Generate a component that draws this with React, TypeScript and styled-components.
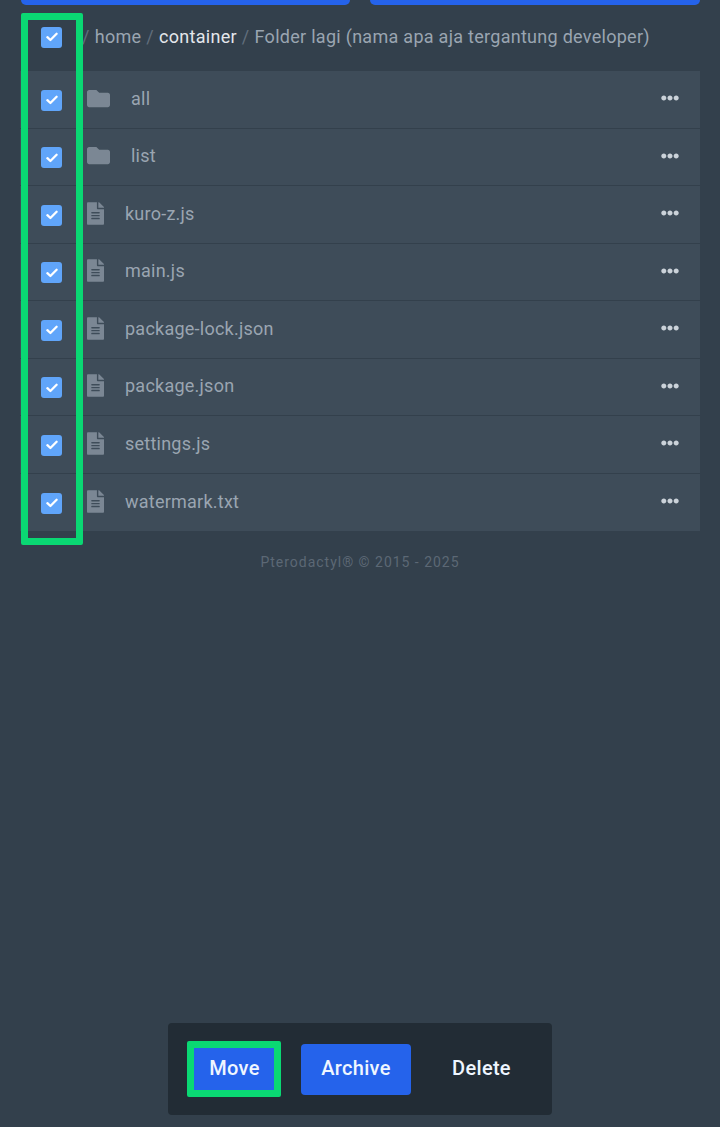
import React from "react";
import styled, { createGlobalStyle } from "styled-components";
import { FaFolder, FaFileAlt, FaEllipsisH } from "react-icons/fa";

const Global = createGlobalStyle`
  html, body { margin: 0; padding: 0; background: #33404c; }
  * { box-sizing: border-box; }
`;

const Page = styled.div`
  position: relative;
  min-height: 1127px;
  padding: 0 20px 12px;
  display: flex;
  flex-direction: column;
  font-family: Roboto, "Liberation Sans", sans-serif;
  letter-spacing: 0.015em;
  color: #9aa5b1;
`;

const TopActions = styled.div`
  display: grid;
  grid-template-columns: 329px 330px;
  gap: 20px;
  height: 5px;
  padding-left: 1px;
`;

const TopButton = styled.div`
  background: #2563eb;
  border-radius: 0 0 5px 5px;
`;

const BreadcrumbBar = styled.div`
  height: 66px;
  display: flex;
  align-items: center;
  padding: 0 0 2px 21px;
  font-size: 18px;
  letter-spacing: 0.0155em;
`;

const Check = styled.span`
  flex: none;
  width: 21px;
  height: 21px;
  border-radius: 3px;
  background: #60a5fa;
  display: flex;
  align-items: center;
  justify-content: center;
`;

const RowCheck = styled(Check)`
  margin-top: 2px;
`;

const Crumbs = styled.div`
  display: flex;
  align-items: center;
  margin: 0 0 1px 20px;
  white-space: nowrap;
`;

const Sep = styled.span`
  color: #616e7c;
  margin: 0 5px;
  &:first-child { margin-left: 0; }
`;

const Crumb = styled.span<{ $current?: boolean }>`
  color: ${(p) => (p.$current ? "#e4e7eb" : "#9aa5b1")};
`;

const List = styled.div`
  display: flex;
  flex-direction: column;
`;

const Row = styled.div`
  height: 57.5px;
  display: flex;
  align-items: center;
  padding: 0 21px 0 21px;
  background: #3e4c59;
  border-bottom: 1px solid #33404c;
  font-size: 18px;
  &:last-child { border-bottom: 0; }
`;

const IconCell = styled.span<{ $folder: boolean }>`
  flex: none;
  margin: 0 0 2px 25px;
  width: ${(p) => (p.$folder ? "44px" : "38px")};
  display: flex;
  align-items: center;
  color: #7b8794;
  svg { width: ${(p) => (p.$folder ? "23px" : "17px")}; height: 23px; display: block; }
`;

const Name = styled.span`
  flex: 1;
  margin-bottom: 2px;
  color: #9aa5b1;
`;

const Menu = styled.span`
  flex: none;
  margin-bottom: 2px;
  color: #cbd2d9;
  display: flex;
  svg { width: 18px; height: 18px; display: block; }
`;

const Footer = styled.p`
  margin: 21px 0 0;
  text-align: center;
  font-size: 14px;
  letter-spacing: 0.07em;
  line-height: 20px;
  color: #5c6875;
`;

const ActionBar = styled.div`
  position: relative;
  margin: auto auto 0;
  width: 384px;
  height: 92px;
  border-radius: 4px;
  background: #222c35;
  display: flex;
  align-items: center;
  padding: 0 26px;
  gap: 26px;
`;

const ActionButton = styled.button<{ $variant: "primary" | "ghost"; $w: number }>`
  width: ${(p) => p.$w}px;
  height: 51px;
  border: 0;
  border-radius: 4px;
  padding: 0 0 2px;
  background: ${(p) => (p.$variant === "primary" ? "#2563eb" : "transparent")};
  color: #eff6ff;
  font-family: inherit;
  font-size: 20px;
  font-weight: 500;
  letter-spacing: 0.015em;
`;

const Highlight = styled.div`
  position: absolute;
  border: 7px solid #0ad873;
  border-radius: 2px;
  pointer-events: none;
`;

const CheckHighlight = styled(Highlight)`
  left: 21px;
  top: 13px;
  width: 62px;
  height: 532px;
`;

const MoveHighlight = styled(Highlight)`
  left: 19px;
  top: 18px;
  width: 94px;
  height: 56px;
`;

const CheckMark = () => (
  <svg width="12" height="10" viewBox="0 0 12 10" fill="none">
    <path d="M1.4 5.2 4.4 8 10.6 1.8" stroke="#fff" strokeWidth="2.3" strokeLinecap="round" strokeLinejoin="round" />
  </svg>
);

const files: { name: string; folder: boolean }[] = [
  { name: "all", folder: true },
  { name: "list", folder: true },
  { name: "kuro-z.js", folder: false },
  { name: "main.js", folder: false },
  { name: "package-lock.json", folder: false },
  { name: "package.json", folder: false },
  { name: "settings.js", folder: false },
  { name: "watermark.txt", folder: false },
];

export default function App() {
  return (
    <Page>
      <Global />
      <TopActions>
        <TopButton />
        <TopButton />
      </TopActions>
      <BreadcrumbBar>
        <Check><CheckMark /></Check>
        <Crumbs>
          <Sep>/</Sep>
          <Crumb>home</Crumb>
          <Sep>/</Sep>
          <Crumb $current>container</Crumb>
          <Sep>/</Sep>
          <Crumb>Folder lagi (nama apa aja tergantung developer)</Crumb>
        </Crumbs>
      </BreadcrumbBar>
      <List>
        {files.map((f) => (
          <Row key={f.name}>
            <RowCheck><CheckMark /></RowCheck>
            <IconCell $folder={f.folder}>{f.folder ? <FaFolder /> : <FaFileAlt />}</IconCell>
            <Name>{f.name}</Name>
            <Menu><FaEllipsisH /></Menu>
          </Row>
        ))}
      </List>
      <Footer>Pterodactyl® © 2015 - 2025</Footer>
      <ActionBar>
        <ActionButton $variant="primary" $w={81}>Move</ActionButton>
        <ActionButton $variant="primary" $w={110}>Archive</ActionButton>
        <ActionButton $variant="ghost" $w={89}>Delete</ActionButton>
        <MoveHighlight />
      </ActionBar>
      <CheckHighlight />
    </Page>
  );
}
